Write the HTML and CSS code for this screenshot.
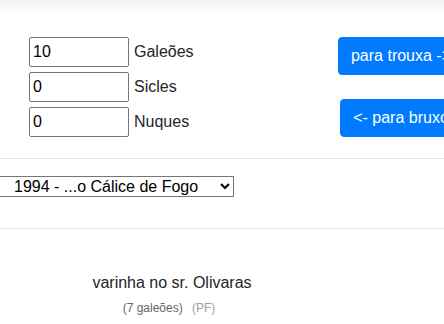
FILE: index.html
```html
<!DOCTYPE html>
<html lang="pt">
<head>
    <meta charset="UTF-8">
    <meta name="viewport" content="width=device-width, initial-scale=1.0">
    <title>Conversor de moedas bruxas</title>
    <link rel="stylesheet" href="styles.css">
</head>
<body>

<div class="top-shadow"></div>

<div class="converter">
    <div class="wallet">
        <div class="coin-row">
            <input class="coin-input" type="text" value="10">
            <label>Galeões</label>
        </div>
        <div class="coin-row">
            <input class="coin-input" type="text" value="0">
            <label>Sicles</label>
        </div>
        <div class="coin-row">
            <input class="coin-input" type="text" value="0">
            <label>Nuques</label>
        </div>
    </div>
    <div class="actions">
        <button class="btn">para trouxa -&gt;</button>
        <button class="btn">&lt;- para bruxo</button>
    </div>
</div>

<hr class="divider">

<div class="year-picker">
    <select class="year-select">
        <option selected>1994 - ...o Cálice de Fogo</option>
        <option>1991 - ...e a Pedra Filosofal</option>
        <option>1992 - ...e a Câmara Secreta</option>
    </select>
</div>

<hr class="divider divider-low">

<div class="result">
    <div class="item-name">varinha no sr. Olivaras</div>
    <div class="item-price">
        <span class="price">(7 galeões)</span>
        <span class="source">(PF)</span>
    </div>
</div>

</body>
</html>
```

FILE: styles.css
```css
body {
    margin: 0;
    width: 444px;
    overflow: hidden;
    font-family: "Liberation Sans", Arial, sans-serif;
    font-size: 16px;
    color: #212529;
    background: #fff;
}

.top-shadow {
    height: 12px;
    background: linear-gradient(#f2f2f2, #fff);
}

.converter {
    display: flex;
    padding-top: 25px;
}

.wallet {
    width: 344px;
    flex-shrink: 0;
    box-sizing: border-box;
    padding-left: 29px;
    display: flex;
    flex-direction: column;
    gap: 5px;
}

.coin-row {
    display: flex;
    align-items: center;
}

.coin-input {
    width: 100px;
    height: 30px;
    box-sizing: border-box;
    padding: 1px 3px;
    border: 1px solid #767676;
    border-radius: 2px;
    font-family: inherit;
    font-size: 16px;
    color: #000;
}

.coin-row label {
    margin-left: 5px;
}

.actions {
    width: 114px;
    flex-shrink: 0;
    display: flex;
    flex-direction: column;
    align-items: center;
    gap: 24px;
}

.btn {
    flex-shrink: 0;
    white-space: nowrap;
    padding: 6px 12px;
    border: 1px solid #007bff;
    border-radius: 4px;
    background-color: #007bff;
    color: #fff;
    font-family: inherit;
    font-size: 16px;
    line-height: 24px;
}

.divider {
    margin: 21px 0 0;
    border: 0;
    border-top: 1px solid #e6e6e6;
}

.divider-low {
    margin-top: 31px;
}

.year-picker {
    padding-top: 17px;
}

.year-select {
    margin-left: -4px;
    width: 238px;
    height: 21px;
    padding: 0 0 0 13px;
    border: 1px solid #767676;
    border-radius: 0;
    background: #fff;
    font-family: inherit;
    font-size: 16px;
    color: #000;
}

.result {
    width: 338px;
    text-align: center;
    padding-top: 42px;
}

.item-name {
    width: 344px;
    line-height: 24px;
}

.item-price {
    margin-top: 6px;
    font-size: 12px;
}

.price {
    color: #5f666d;
}

.source {
    margin-left: 6px;
    color: #a0a0a0;
}
```
